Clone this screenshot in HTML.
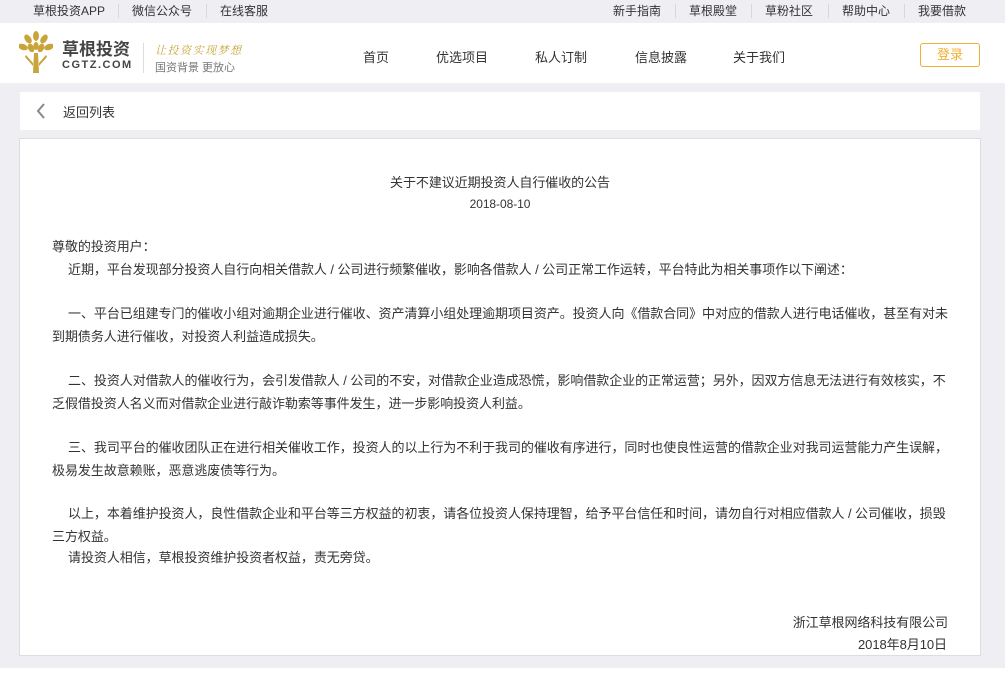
<!DOCTYPE html>
<html><head><meta charset="utf-8"><style>
*{margin:0;padding:0;box-sizing:border-box}
body{width:1005px;height:680px;overflow:hidden;background:#efeff3;font-family:"Liberation Sans","Noto Sans CJK SC",sans-serif;color:#333;position:relative}
.a{position:absolute;white-space:nowrap}
.top{position:absolute;left:0;top:0;width:1005px;height:23px;background:#efeff3;font-size:12px}
.top span{position:absolute;top:3px;line-height:16px}
.sep{position:absolute;top:4px;width:1px;height:14px;background:#d8d8dc}
.hdr{position:absolute;left:0;top:23px;width:1005px;height:60px;background:#fff}
.nav{position:absolute;top:24px;font-size:13px;color:#333;transform:translateX(-50%)}
.back{position:absolute;left:20px;top:92px;width:960px;height:38px;background:#fff}
.box{position:absolute;left:19px;top:138px;width:962px;height:518px;background:#fff;border:1px solid #ddd}
.t{font-size:13px;line-height:23px;position:absolute;white-space:nowrap;color:#333;letter-spacing:-0.06px}
</style></head><body>
<div class="top">
<span style="left:33px">草根投资APP</span><div class="sep" style="left:118px"></div>
<span style="left:132px">微信公众号</span><div class="sep" style="left:206px"></div>
<span style="left:220px">在线客服</span>
<span style="left:613px">新手指南</span><div class="sep" style="left:675px"></div>
<span style="left:689px">草根殿堂</span><div class="sep" style="left:751px"></div>
<span style="left:765px">草粉社区</span><div class="sep" style="left:828px"></div>
<span style="left:842px">帮助中心</span><div class="sep" style="left:904px"></div>
<span style="left:918px">我要借款</span>
</div>
<div class="hdr">
<svg class="a" style="left:19px;top:8px" width="34" height="44" viewBox="0 0 34 44">
<g fill="#c9a43a">
<ellipse cx="17" cy="5" rx="3" ry="5"/>
<ellipse cx="9" cy="8" rx="3" ry="5" transform="rotate(-35 9 8)"/>
<ellipse cx="25" cy="8" rx="3" ry="5" transform="rotate(35 25 8)"/>
<ellipse cx="4" cy="16" rx="3" ry="5" transform="rotate(-70 4 16)"/>
<ellipse cx="30" cy="16" rx="3" ry="5" transform="rotate(70 30 16)"/>
<ellipse cx="12" cy="17" rx="3" ry="4.5" transform="rotate(-25 12 17)"/>
<ellipse cx="22" cy="17" rx="3" ry="4.5" transform="rotate(25 22 17)"/>
<ellipse cx="17" cy="15" rx="2.5" ry="4"/>
<path d="M15 22h4l1 20h-6z"/>
<path d="M7 24l7 8v3l-8-9zM27 24l-7 8v3l8-9z"/>
</g></svg>
<div class="a" style="left:62px;top:12px;font-size:17px;font-weight:bold;color:#444">草根投资</div>
<div class="a" style="left:62px;top:36px;font-size:11px;font-weight:bold;color:#444;letter-spacing:1.5px">CGTZ.COM</div>
<div class="a" style="left:143px;top:20px;width:1px;height:30px;background:#ddd"></div>
<div class="a" style="left:155px;top:19px;font-size:11px;color:#c9a43a;font-style:italic;font-family:'Noto Serif CJK SC',serif;letter-spacing:1.5px">让投资实现梦想</div>
<div class="a" style="left:155px;top:36px;font-size:11px;color:#777">国资背景 更放心</div>
<div class="nav" style="left:376px">首页</div>
<div class="nav" style="left:462px">优选项目</div>
<div class="nav" style="left:561px">私人订制</div>
<div class="nav" style="left:661px">信息披露</div>
<div class="nav" style="left:759px">关于我们</div>
<div class="a" style="left:920px;top:20px;width:60px;height:24px;border:1px solid #f0b030;border-radius:3px;color:#f0b030;font-size:13px;text-align:center;line-height:22px">登录</div>
</div>
<div class="back">
<svg class="a" style="left:16px;top:11px" width="10" height="16" viewBox="0 0 10 16"><path d="M8 1L2 8l6 7" fill="none" stroke="#888" stroke-width="2"/></svg>
<div class="a" style="left:43px;top:10px;font-size:13px">返回列表</div>
</div>
<div class="box"></div>
<div class="t" style="left:0;width:1000px;text-align:center;top:171px">关于不建议近期投资人自行催收的公告</div>
<div class="t" style="left:0;width:1000px;text-align:center;top:193px;font-size:12px">2018-08-10</div>
<div class="t" style="left:52px;top:235px">尊敬的投资用户：</div>
<div class="t" style="left:68px;top:258px">近期，平台发现部分投资人自行向相关借款人 / 公司进行频繁催收，影响各借款人 / 公司正常工作运转，平台特此为相关事项作以下阐述：</div>
<div class="t" style="left:68px;top:302px">一、平台已组建专门的催收小组对逾期企业进行催收、资产清算小组处理逾期项目资产。投资人向《借款合同》中对应的借款人进行电话催收，甚至有对未</div>
<div class="t" style="left:52px;top:325px">到期债务人进行催收，对投资人利益造成损失。</div>
<div class="t" style="left:68px;top:369px">二、投资人对借款人的催收行为，会引发借款人 / 公司的不安，对借款企业造成恐慌，影响借款企业的正常运营；另外，因双方信息无法进行有效核实，不</div>
<div class="t" style="left:52px;top:392px">乏假借投资人名义而对借款企业进行敲诈勒索等事件发生，进一步影响投资人利益。</div>
<div class="t" style="left:68px;top:436px">三、我司平台的催收团队正在进行相关催收工作，投资人的以上行为不利于我司的催收有序进行，同时也使良性运营的借款企业对我司运营能力产生误解，</div>
<div class="t" style="left:52px;top:459px">极易发生故意赖账，恶意逃废债等行为。</div>
<div class="t" style="left:68px;top:502px">以上，本着维护投资人，良性借款企业和平台等三方权益的初衷，请各位投资人保持理智，给予平台信任和时间，请勿自行对相应借款人 / 公司催收，损毁</div>
<div class="t" style="left:52px;top:525px">三方权益。</div>
<div class="t" style="left:68px;top:546px">请投资人相信，草根投资维护投资者权益，责无旁贷。</div>
<div class="t" style="left:0;width:948px;text-align:right;top:611px">浙江草根网络科技有限公司</div>
<div class="t" style="left:0;width:947px;text-align:right;top:633px">2018年8月10日</div>
<div class="a" style="left:0;top:668px;width:1005px;height:12px;background:#fff"></div>
</body></html>
